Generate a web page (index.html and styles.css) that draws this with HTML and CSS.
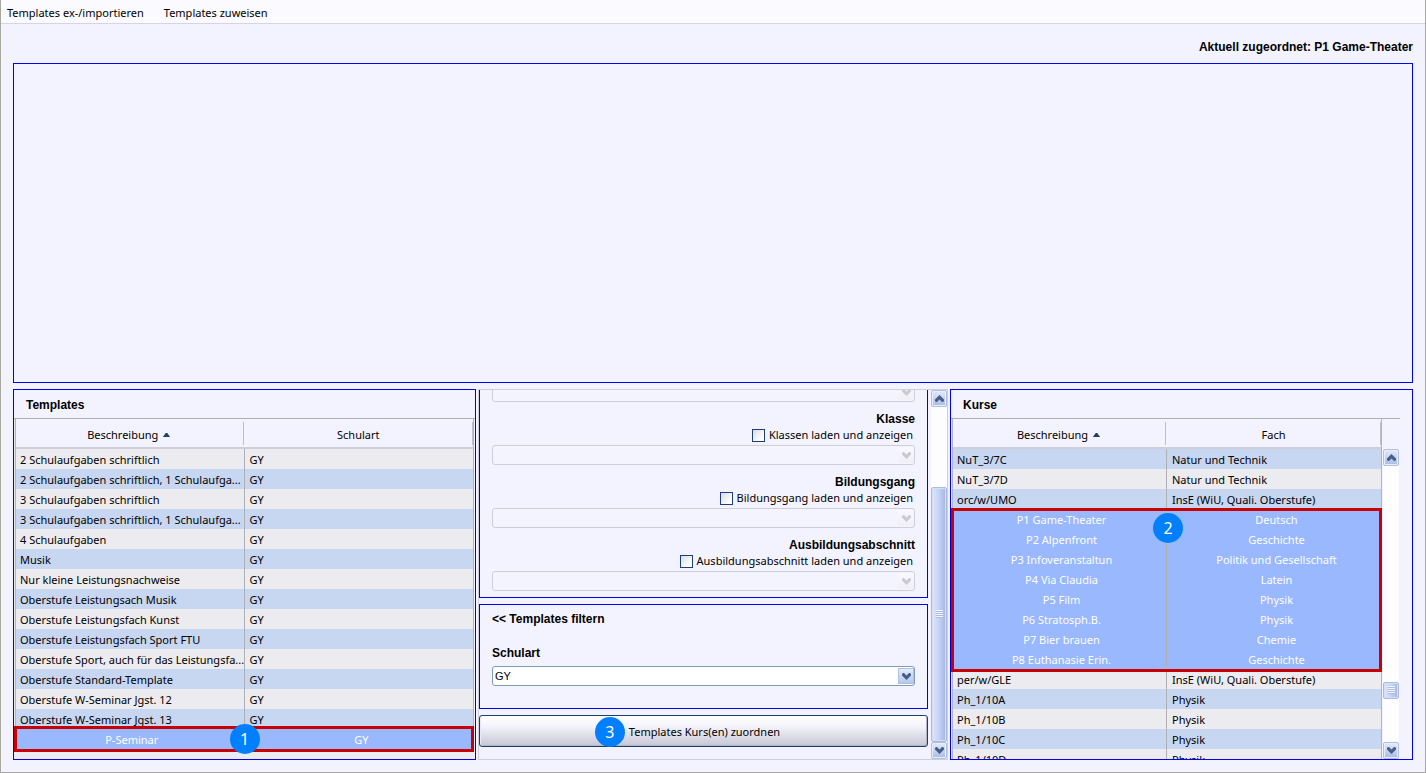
FILE: index.html
```html
<!DOCTYPE html>
<html lang="de">
<head>
<meta charset="utf-8">
<title>Templates zuweisen</title>
<link rel="stylesheet" href="styles.css">
</head>
<body>
<svg class="defs" aria-hidden="true">
  <symbol id="chev-down" viewBox="0 0 9 7"><path d="M0 1l1-1h1l2.500 2.500L7 0h1l1 1v1.500L4.500 7 0 2.500z"/></symbol>
  <symbol id="chev-up" viewBox="0 0 9 7"><path d="M0 6l1 1h1l2.500-2.500L7 7h1l1-1V4.500L4.500 0 0 4.500z"/></symbol>
  <symbol id="sort" viewBox="0 0 9 5"><path d="M0 5h9L5.500 0h-2z"/></symbol>
</svg>
<nav class="menubar">
  <button type="button" class="menu">Templates ex-/importieren</button>
  <button type="button" class="menu">Templates zuweisen</button>
</nav>
<main class="content">
  <p class="assigned">Aktuell zugeordnet: P1 Game-Theater</p>
  <section class="preview"></section>
  <div class="columns">
    <section class="panel">
      <h2 class="panel-title">Templates</h2>
      <div class="table-area">
        <div class="table-clip">
          <table class="grid">
            <thead><tr><th><span>Beschreibung<svg class="sort"><use href="#sort"/></svg></span></th><th><span>Schulart</span></th></tr></thead>
            <tbody class="rows">
              <tr><td>2 Schulaufgaben schriftlich</td><td>GY</td></tr>
              <tr><td>2 Schulaufgaben schriftlich, 1 Schulaufga...</td><td>GY</td></tr>
              <tr><td>3 Schulaufgaben schriftlich</td><td>GY</td></tr>
              <tr><td>3 Schulaufgaben schriftlich, 1 Schulaufga...</td><td>GY</td></tr>
              <tr><td>4 Schulaufgaben</td><td>GY</td></tr>
              <tr><td>Musik</td><td>GY</td></tr>
              <tr><td>Nur kleine Leistungsnachweise</td><td>GY</td></tr>
              <tr><td>Oberstufe Leistungsach Musik</td><td>GY</td></tr>
              <tr><td>Oberstufe Leistungsfach Kunst</td><td>GY</td></tr>
              <tr><td>Oberstufe Leistungsfach Sport FTU</td><td>GY</td></tr>
              <tr><td>Oberstufe Sport, auch für das Leistungsfa...</td><td>GY</td></tr>
              <tr><td>Oberstufe Standard-Template</td><td>GY</td></tr>
              <tr><td>Oberstufe W-Seminar Jgst. 12</td><td>GY</td></tr>
              <tr><td>Oberstufe W-Seminar Jgst. 13</td><td>GY</td></tr>
            </tbody>
            <tbody class="selected selected-single">
              <tr><td>P-Seminar<span class="badge badge-row">1</span></td><td>GY</td></tr>
            </tbody>
          </table>
        </div>
      </div>
    </section>

    <section class="scroller">
      <div class="viewport">
        <div class="box">
          <div class="group"><div class="combo"><select disabled aria-label="Jahrgangsstufe"></select><svg class="arrow"><use href="#chev-down" x="4" y="5" width="9" height="7"/></svg></div></div>
          <div class="group">
            <label class="heading" for="klasse">Klasse</label>
            <label class="check"><input type="checkbox">Klassen laden und anzeigen</label>
            <div class="combo"><select id="klasse" disabled></select><svg class="arrow"><use href="#chev-down" x="4" y="5" width="9" height="7"/></svg></div>
          </div>
          <div class="group">
            <label class="heading" for="gang">Bildungsgang</label>
            <label class="check"><input type="checkbox">Bildungsgang laden und anzeigen</label>
            <div class="combo"><select id="gang" disabled></select><svg class="arrow"><use href="#chev-down" x="4" y="5" width="9" height="7"/></svg></div>
          </div>
          <div class="group">
            <label class="heading" for="abschnitt">Ausbildungsabschnitt</label>
            <label class="check"><input type="checkbox">Ausbildungsabschnitt laden und anzeigen</label>
            <div class="combo"><select id="abschnitt" disabled></select><svg class="arrow"><use href="#chev-down" x="4" y="5" width="9" height="7"/></svg></div>
          </div>
        </div>
        <div class="box filter">
          <h2 class="filter-title">&lt;&lt; Templates filtern</h2>
          <label class="filter-label" for="schulart">Schulart</label>
          <div class="combo active"><select id="schulart"><option>GY</option></select><svg class="arrow"><use href="#chev-down" x="4" y="5" width="9" height="7"/></svg></div>
        </div>
        <button type="button" class="assign"><span class="assign-text">Templates Kurs(en) zuordnen<span class="badge badge-button">3</span></span></button>
      </div>
      <div class="scrollbar">
        <button type="button" class="step" aria-label="Nach oben"><svg><use href="#chev-up"/></svg></button>
        <div class="track"><div class="space-80"></div><div class="thumb thumb-long"><i class="grip"></i></div></div>
        <button type="button" class="step" aria-label="Nach unten"><svg><use href="#chev-down"/></svg></button>
      </div>
    </section>

    <section class="panel">
      <h2 class="panel-title">Kurse</h2>
      <div class="table-area with-scrollbar">
        <div class="table-clip">
          <table class="grid">
            <thead><tr><th><span>Beschreibung<svg class="sort"><use href="#sort"/></svg></span></th><th><span>Fach</span></th></tr></thead>
            <tbody class="rows rows-blue-first">
              <tr><td>NuT_3/7C</td><td>Natur und Technik</td></tr>
              <tr><td>NuT_3/7D</td><td>Natur und Technik</td></tr>
              <tr><td>orc/w/UMO</td><td>InsE (WiU, Quali. Oberstufe)</td></tr>
            </tbody>
            <tbody class="selected">
              <tr><td>P1 Game-Theater<span class="badge badge-block">2</span></td><td>Deutsch</td></tr>
              <tr><td>P2 Alpenfront</td><td>Geschichte</td></tr>
              <tr><td>P3 Infoveranstaltun</td><td>Politik und Gesellschaft</td></tr>
              <tr><td>P4 Via Claudia</td><td>Latein</td></tr>
              <tr><td>P5 Film</td><td>Physik</td></tr>
              <tr><td>P6 Stratosph.B.</td><td>Physik</td></tr>
              <tr><td>P7 Bier brauen</td><td>Chemie</td></tr>
              <tr><td>P8 Euthanasie Erin.</td><td>Geschichte</td></tr>
            </tbody>
            <tbody class="rows">
              <tr><td>per/w/GLE</td><td>InsE (WiU, Quali. Oberstufe)</td></tr>
              <tr><td>Ph_1/10A</td><td>Physik</td></tr>
              <tr><td>Ph_1/10B</td><td>Physik</td></tr>
              <tr><td>Ph_1/10C</td><td>Physik</td></tr>
              <tr><td>Ph_1/10D</td><td>Physik</td></tr>
            </tbody>
          </table>
        </div>
        <div class="scrollbar">
          <button type="button" class="step" aria-label="Nach oben"><svg><use href="#chev-up"/></svg></button>
          <div class="track"><div class="space-215"></div><div class="thumb thumb-short"><i class="grip"></i></div><div class="space-43"></div></div>
          <button type="button" class="step" aria-label="Nach unten"><svg><use href="#chev-down"/></svg></button>
        </div>
      </div>
    </section>
  </div>
</main>
</body>
</html>
```
FILE: styles.css
```css
* { box-sizing: border-box; }

body {
  margin: 0;
  height: 100vh;
  display: flex;
  flex-direction: column;
  overflow: hidden;
  background: #f3f3ff;
  border: solid #a9a8a0;
  border-width: 0 1px 1px;
  color: #000;
  font: 11px/16px "Noto Sans", "Open Sans", sans-serif;
}

button, select, input { font: inherit; color: inherit; margin: 0; }

.defs { position: absolute; width: 0; height: 0; }

.menubar {
  display: flex;
  gap: 20px;
  height: 24px;
  padding: 2px 6px 0;
  background: #fafaff;
  border-bottom: 1px solid #d6d4e4;
}
.menu { border: 0; padding: 0; background: none; }

.content {
  flex: 1;
  min-height: 0;
  display: flex;
  flex-direction: column;
  padding: 0 12px;
  padding-bottom: 12px;
}

.assigned, .panel-title, .filter-title, .filter-label, .heading {
  margin: 0;
  font: bold 12px/16px "Liberation Sans", Arial, sans-serif;
}
.assigned { padding: 15px 0 8px; text-align: right; }

.preview {
  flex: 318 1 0;
  margin-bottom: 6px;
  border: 1px solid #0000ee;
}

.columns {
  flex: 371 1 0;
  min-height: 0;
  display: grid;
  grid-template-columns: minmax(0, 463fr) minmax(0, 470fr) minmax(0, 463fr);
  grid-template-rows: minmax(0, 1fr);
  gap: 2px;
}

.panel {
  display: flex;
  flex-direction: column;
  min-height: 0;
  border: 1px solid #0000ee;
}
.panel-title { padding: 7px 12px 5px; }

.table-area {
  flex: 1;
  min-height: 0;
  display: grid;
  grid-template-columns: minmax(0, 1fr);
  grid-template-rows: minmax(0, 1fr);
  padding-right: 1px;
  border-top: 1px solid #b0b0b0;
}
.with-scrollbar {
  grid-template-columns: minmax(0, 1fr) 16px;
  column-gap: 1px;
  margin-right: 12px;
}
.with-scrollbar .scrollbar { padding-top: 30px; }

.table-clip {
  min-height: 0;
  padding-left: 1px;
  overflow: hidden;
  background: #ecebef;
}

.grid {
  width: 100%;
  table-layout: fixed;
  border-spacing: 0;
  border: solid #b4b4b8;
  border-width: 0 1px;
}
.grid th {
  height: 30px;
  padding: 0;
  background: #f3f3ff;
  border-bottom: 2px solid #cfced8;
  font-weight: normal;
}
.grid th span {
  display: flex;
  align-items: center;
  justify-content: center;
  gap: 4px;
  height: 23px;
  padding-top: 4px;
  border-right: 1px solid #bdbdc6;
}
.grid th:first-child span { margin-right: 1px; }
.sort { width: 9px; height: 4px; fill: #23435f; }

.grid td {
  position: relative;
  height: 20px;
  padding: 3px 0 1px 4px;
  white-space: nowrap;
}
.grid td:first-child { border-right: 1px solid #b0b0b4; }
.grid td:last-child { padding-left: 5px; }

.rows tr { background: #ecebef; }
.rows tr:nth-child(even) { background: #c7d6f1; }
.rows-blue-first tr:nth-child(odd) { background: #c7d6f1; }
.rows-blue-first tr:nth-child(even) { background: #ecebef; }

.selected { position: relative; z-index: 1; background: #99b8fd; color: #fff; text-align: center; }
.selected::after {
  content: "";
  position: absolute;
  inset: -1px -1px -3px -2px;
  border: 3px solid #c80000;
}
.selected-single::after { top: -3px; }

.badge {
  position: absolute;
  z-index: 2;
  width: 30px;
  height: 30px;
  border-radius: 50%;
  background: #0080ff;
  color: #fff;
  font-size: 16px;
  line-height: 30px;
  text-align: center;
}
.badge-row { right: -16px; top: -5px; }
.badge-block { right: -17px; top: 4px; }
.badge-button { right: calc(100% + 4px); top: -7px; }

.scroller {
  display: grid;
  grid-template-columns: minmax(0, 1fr) 16px;
  grid-template-rows: minmax(0, 1fr);
  column-gap: 3px;
  border: 1px solid #cfcddc;
}
.viewport {
  display: flex;
  flex-direction: column;
  justify-content: flex-end;
  gap: 6px;
  padding-bottom: 12px;
  overflow: hidden;
}
.box {
  flex: none;
  padding: 6px 12px;
  border: 1px solid #0000ee;
}
.group {
  display: flex;
  flex-direction: column;
  align-items: flex-end;
  padding-top: 9px;
}
.check { display: flex; align-items: center; gap: 4px; padding-right: 2px; margin-bottom: 2px; }
.check input {
  appearance: none;
  width: 13px;
  height: 13px;
  border: 1px solid #1c3f7c;
  background: linear-gradient(135deg, #dcdce0, #fff 80%);
}

.combo { display: grid; width: 100%; }
.combo select {
  grid-area: 1 / 1;
  appearance: none;
  height: 20px;
  padding: 0 20px 0 2px;
  border: 1px solid #cfcddc;
  border-radius: 3px;
  background: #f4f4ff;
  font-family: "Liberation Sans", Arial, sans-serif;
  opacity: 1;
}
.arrow {
  grid-area: 1 / 1;
  z-index: 1;
  justify-self: end;
  align-self: center;
  width: 16px;
  height: 16px;
  margin-right: 1px;
  pointer-events: none;
  fill: #cacad5;
  background: linear-gradient(#f8f8fe, #f0f0f4);
}
.active select { border-color: #7f9db9; background: #fff; }
.active .arrow {
  fill: #465f87;
  background: linear-gradient(#e8eefc, #b4c4ee);
  box-shadow: inset 0 0 0 1px #b0c0e0;
}

.filter { padding-bottom: 22px; }
.filter-title { margin-bottom: 18px; }
.filter-label { display: block; margin-bottom: 5px; }

.assign {
  flex: none;
  height: 32px;
  padding: 2px 0 0 2px;
  border: 1px solid #1c3f6e;
  border-radius: 3px;
  background: linear-gradient(#fff, #f3f3fb 35%, #c6c6d6);
  box-shadow: inset 1px 0 #e8e8f0, inset -1px -1px #b4b4c6;
}
.assign-text { position: relative; display: inline-block; }

.scrollbar { display: flex; flex-direction: column; min-height: 0; }
.step {
  flex: none;
  display: grid;
  place-items: center;
  height: 17px;
  padding: 0;
  border: 1px solid #b0c0e0;
  border-radius: 2px;
  background: linear-gradient(#e4eafa, #a8bae6);
  box-shadow: inset 0 0 0 1px #e8eefc;
}
.step svg { width: 9px; height: 7px; fill: #465f87; }
.track { flex: 1; display: flex; flex-direction: column; background: #fdfdff; }
.space-80 { flex: 80 1 0; }
.space-215 { flex: 215 1 0; }
.space-43 { flex: 43 1 0; }
.thumb {
  display: grid;
  place-items: center;
  border: 1px solid #a9bbe0;
  border-radius: 2px;
  background: linear-gradient(90deg, #dfe6fa, #c3d2f7 50%, #a6b4dc);
  box-shadow: inset 0 0 0 1px #d4def5;
}
.thumb-long { flex: 255 1 0; }
.thumb-short { flex: none; height: 17px; }
.grip { width: 7px; height: 8px; background: repeating-linear-gradient(#f4f7ff 0 1px, #aabbe4 1px 2px); }
```
